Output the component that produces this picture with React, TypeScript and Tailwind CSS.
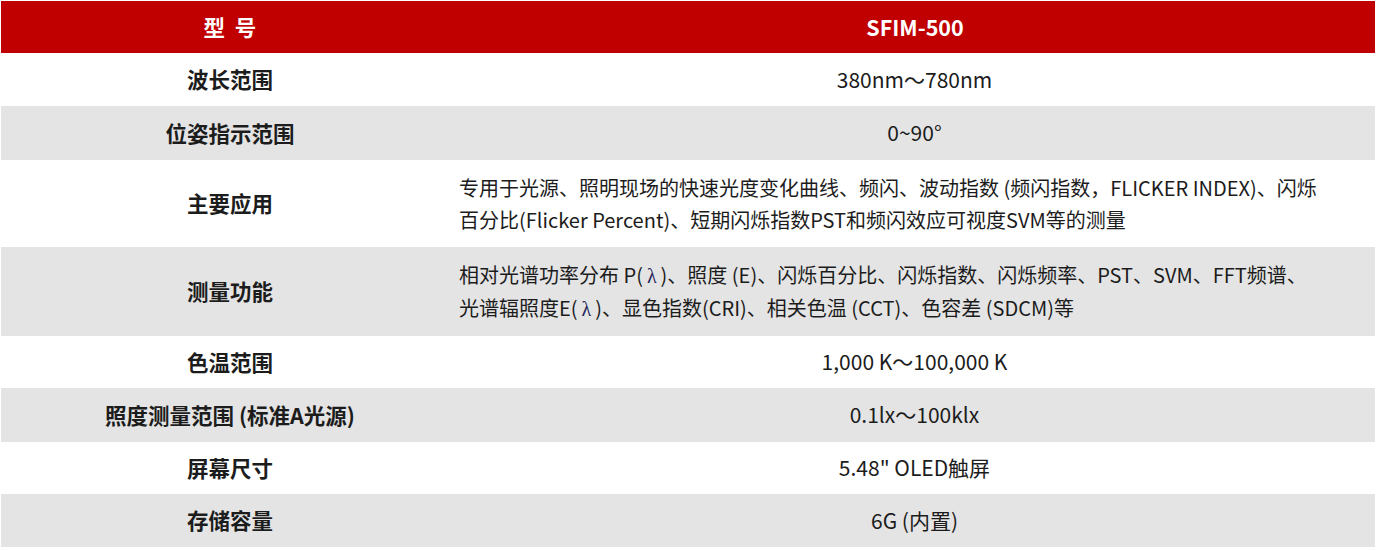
const rows: { label: string; value: React.ReactNode; multi?: boolean; gray: boolean; h: string }[] = [
  { label: '波长范围', value: '380nm～780nm', gray: false, h: 'h-[53px]' },
  { label: '位姿指示范围', value: '0~90°', gray: true, h: 'h-[54px]' },
  {
    label: '主要应用',
    multi: true,
    gray: false,
    h: 'h-[87px]',
    value: (
      <>
        <span className="block">专用于光源、照明现场的快速光度变化曲线、频闪、波动指数 (频闪指数，FLICKER INDEX)、闪烁</span>
        <span className="block">百分比(Flicker Percent)、短期闪烁指数PST和频闪效应可视度SVM等的测量</span>
      </>
    ),
  },
  {
    label: '测量功能',
    multi: true,
    gray: true,
    h: 'h-[89px]',
    value: (
      <>
        <span className="block">
          相对光谱功率分布 P(<Lambda />)、照度 (E)、闪烁百分比、闪烁指数、闪烁频率、PST、SVM、FFT频谱、
        </span>
        <span className="block">
          光谱辐照度E(<Lambda />)、显色指数(CRI)、相关色温 (CCT)、色容差 (SDCM)等
        </span>
      </>
    ),
  },
  { label: '色温范围', value: '1,000 K～100,000 K', gray: false, h: 'h-[52px]' },
  { label: '照度测量范围 (标准A光源)', value: '0.1lx～100klx', gray: true, h: 'h-[54px]' },
  { label: '屏幕尺寸', value: '5.48" OLED触屏', gray: false, h: 'h-[52px]' },
  { label: '存储容量', value: '6G (内置)', gray: true, h: 'h-[53px]' },
];

function Lambda() {
  return <span className="px-[4px] font-['Liberation_Serif',serif] text-[#23235a]">λ</span>;
}

export default function App() {
  return (
    <div className="bg-white pl-px pt-px pr-[2px] font-['Noto_Sans_CJK_SC',sans-serif] text-[#1c1c1c]">
      <div className="grid h-[52px] grid-cols-[458px_1fr] items-center bg-[#c00000] text-[21.5px] font-bold text-white">
        <div className="text-center">型&nbsp;&nbsp;号</div>
        <div className="pr-[4px] text-center">SFIM-500</div>
      </div>
      {rows.map((r) => (
        <div
          key={r.label}
          className={`grid grid-cols-[458px_1fr] items-center ${r.h} ${r.gray ? 'bg-[#e4e4e4]' : 'bg-white'}`}
        >
          <div className="text-center text-[21.5px] font-bold">{r.label}</div>
          {r.multi ? (
            <div className="whitespace-nowrap text-left text-[20px] leading-[32px]">{r.value}</div>
          ) : (
            <div className="pr-[5px] text-center text-[21px]">{r.value}</div>
          )}
        </div>
      ))}
    </div>
  );
}
